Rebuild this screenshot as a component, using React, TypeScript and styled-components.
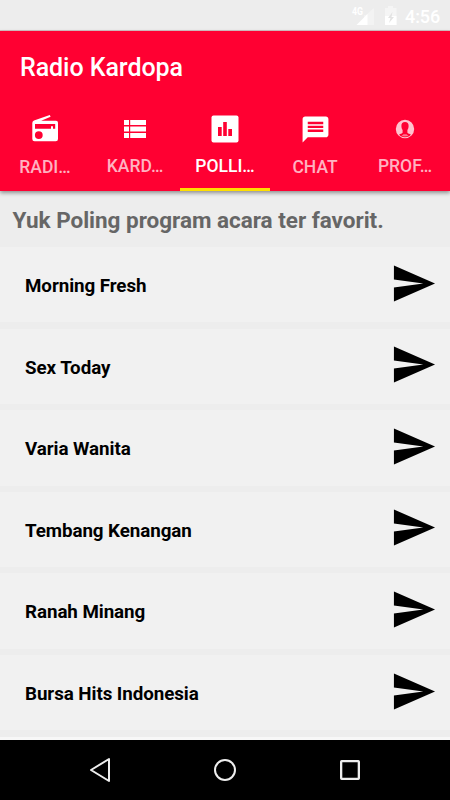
import React from 'react';
import styled, { createGlobalStyle } from 'styled-components';

const GlobalStyle = createGlobalStyle`
  * { box-sizing: border-box; }
  body { margin: 0; background: #ededed; font-family: Roboto, sans-serif; }
  svg { display: block; flex: none; }
`;

const Screen = styled.div`
  width: 450px;
  height: 800px;
  display: flex;
  flex-direction: column;
  overflow: hidden;
  background: #ededed;
`;

const StatusBar = styled.div`
  flex: none;
  height: 31px;
  display: flex;
  justify-content: flex-end;
  padding-right: 10px;
  border-bottom: 1px solid #d6bfc2;
  color: #fff;
`;

const Clock = styled.span`
  font-size: 18px;
  font-weight: 500;
  line-height: 33px;
  width: 35px;
  margin-left: 5px;
  letter-spacing: -0.1px;
`;

const AppBar = styled.header`
  flex: none;
  height: 160px;
  display: flex;
  flex-direction: column;
  background: #ff0032;
  color: #fff;
  box-shadow: 0 2px 4px rgba(0, 0, 0, 0.4);
  position: relative;
`;

const Title = styled.h1`
  margin: 0;
  height: 73px;
  padding-left: 20px;
  font-size: 25px;
  font-weight: 500;
  line-height: 74px;
  letter-spacing: -0.06px;
`;

const Tabs = styled.nav`
  flex: 1;
  display: grid;
  grid-template-columns: repeat(5, 90px);
`;

const Tab = styled.div<{ $active?: boolean }>`
  display: flex;
  flex-direction: column;
  align-items: center;
  border-bottom: 3px solid ${(p) => (p.$active ? '#ffde00' : 'transparent')};
  color: ${(p) => (p.$active ? '#fff' : '#ffb2c1')};
`;

const TabIcon = styled.div`
  height: 50px;
  display: flex;
  align-items: center;
  color: #fff;
`;

const TabLabel = styled.span<{ $drop: number }>`
  font-size: 17.5px;
  font-weight: 500;
  line-height: 24px;
  padding-top: ${(p) => p.$drop}px;
`;

const Heading = styled.h2`
  flex: none;
  margin: 0;
  height: 56px;
  padding-left: 12.5px;
  font-size: 22.5px;
  font-weight: 700;
  line-height: 58px;
  letter-spacing: -0.02px;
  color: #666;
  white-space: nowrap;
`;

const List = styled.main`
  flex: 1;
  display: flex;
  flex-direction: column;
  gap: 6.2px;
  border-bottom: 3px solid #f7f7f7;
`;

const Row = styled.div`
  flex: none;
  height: 75.4px;
  display: flex;
  align-items: center;
  justify-content: space-between;
  padding: 0 13px 3px 25px;
  background: #f1f1f1;
`;

const RowName = styled.span`
  font-size: 18.75px;
  font-weight: 700;
  line-height: 24px;
  letter-spacing: -0.06px;
  color: #000;
  padding-top: 5.6px;
`;

const NavBar = styled.footer`
  flex: none;
  height: 60px;
  display: grid;
  grid-template-columns: repeat(3, 125px);
  justify-content: center;
  align-items: center;
  justify-items: center;
  background: #000;
`;

const SendIcon = () => (
  <svg width="47" height="47" viewBox="0 0 24 24">
    <path d="M2.01 21.2 23 12 2.01 2.8 2 9.9 17 12 2 14.1z" />
  </svg>
);

const RadioIcon = () => (
  <svg width="30" height="30" viewBox="30 114 30 30" fill="currentColor">
    <path
      fillRule="evenodd"
      d="M34 120.600 49.800 115l.8 1.700-9.400 4.100H56q2 0 2 2V139q0 2.300-2.300 2.300H34.600q-2.300 0-2.300-2.300v-16q0-1.800 1.700-2.400zM35 124v4.700h16v-2.500h2v2.500h2.200V124zM38.800 131.200a3.900 3.900 0 1 0 0 7.800 3.900 3.900 0 0 0 0-7.800z"
    />
  </svg>
);

const ListIcon = () => (
  <svg width="22" height="18" viewBox="0 0 22 18" fill="currentColor">
    <path d="M0 0h5v5H0zM6.200 0H22v5H6.200zM0 6.500h5v5H0zM6.200 6.500H22v5H6.200zM0 13h5v5H0zM6.200 13H22v5H6.200z" />
  </svg>
);

const PollIcon = () => (
  <svg width="28" height="28" viewBox="0 0 28 28">
    <rect x="0.500" y="0.500" width="27" height="27" rx="2" fill="#fff" />
    <path fill="#ff0032" d="M7 12h3.700v9H7zM12.200 7h3.600v14h-3.600zM17.300 14h3.700v7h-3.700z" />
  </svg>
);

const ChatIcon = () => (
  <svg width="31" height="31" viewBox="0 0 24 24" fill="currentColor">
    <path d="M20 2H4c-1.100 0-1.990.9-1.990 2L2 22l4-4h14c1.100 0 2-.9 2-2V4c0-1.100-.9-2-2-2zM6 6h12v2H6zm0 3.100h12v1.800H6zM6 12h12v2H6z" fillRule="evenodd" />
  </svg>
);

const ProfileIcon = () => (
  <svg width="20" height="20" viewBox="0 0 20 20" fill="none">
    <circle cx="10" cy="10" r="8" fill="#ff0032" />
    <path
      fill="#ffc2ce"
      fillRule="evenodd"
      d="M10 .8a9.200 9.200 0 1 0 0 18.400A9.200 9.200 0 0 0 10 .8zM10 3c-2.400 0-3.700 1.500-3.600 3.900.05 2 .6 3.200 1.200 4.100v2.800c-.4.900-2.600 1-3.400 1.700.8 1.200 1.300 1.300 1.800 1.700 2.400 1.300 5.600 1.300 8 0 .5-.4 1-.5 1.800-1.700-.8-.7-3-.8-3.400-1.700V11c.6-.9 1.150-2.100 1.200-4.100C13.700 4.500 12.400 3 10 3z"
    />
    <path fill="#ffc2ce" d="M6.500 16.400c.8-.4 1.600-.6 2-1.200h3c.4.600 1.200.8 2 1.200-1.800 1.300-5.200 1.300-7 0z" opacity=".6" />
  </svg>
);

const StatusIcons = () => (
  <svg width="50" height="30" viewBox="350 0 50 30">
    <text x="352" y="15" fontSize="10" fontWeight="700" textLength="11" lengthAdjust="spacingAndGlyphs" fill="#fff">4G</text>
    <path d="M374 8v17h-10V15h2z" fill="#f3f3f3" />
    <path d="M367.500 14v11H356.500z" fill="#fff" />
    <path d="M385 8h3V6h5v2h3.500v17H385z" fill="#f5f5f5" />
    <path d="M385 16h11.500v9H385z" fill="#fff" />
    <path d="m392.500 12-4.500 6h2.500l-1.500 5 5-6h-2.500z" fill="#e3e3e3" />
  </svg>
);

const BackIcon = () => (
  <svg width="24" height="28" viewBox="0 0 24 28" fill="none" stroke="#eee" strokeWidth="2" strokeLinejoin="round">
    <path d="M21 3v22L3 14z" />
  </svg>
);

const HomeIcon = () => (
  <svg width="24" height="24" viewBox="0 0 24 24" fill="none" stroke="#eee" strokeWidth="2">
    <circle cx="12" cy="12" r="10" />
  </svg>
);

const RecentIcon = () => (
  <svg width="20" height="20" viewBox="0 0 20 20" fill="none" stroke="#eee" strokeWidth="2.300">
    <rect x="1.150" y="1.150" width="17.700" height="17.700" rx="0.500" />
  </svg>
);

const tabs = [
  { label: 'RADI…', icon: <RadioIcon />, drop: 1 },
  { label: 'KARD…', icon: <ListIcon />, drop: 0 },
  { label: 'POLLI…', icon: <PollIcon />, drop: 0, active: true },
  { label: 'CHAT', icon: <ChatIcon />, drop: 1 },
  { label: 'PROF…', icon: <ProfileIcon />, drop: 0 },
];

const programs = ['Morning Fresh', 'Sex Today', 'Varia Wanita', 'Tembang Kenangan', 'Ranah Minang', 'Bursa Hits Indonesia'];

export default function App() {
  return (
    <Screen>
      <GlobalStyle />
      <StatusBar>
        <StatusIcons />
        <Clock>4:56</Clock>
      </StatusBar>
      <AppBar>
        <Title>Radio Kardopa</Title>
        <Tabs>
          {tabs.map((t) => (
            <Tab key={t.label} $active={t.active}>
              <TabIcon>{t.icon}</TabIcon>
              <TabLabel $drop={t.drop}>{t.label}</TabLabel>
            </Tab>
          ))}
        </Tabs>
      </AppBar>
      <Heading>Yuk Poling program acara ter favorit.</Heading>
      <List>
        {programs.map((name) => (
          <Row key={name}>
            <RowName>{name}</RowName>
            <SendIcon />
          </Row>
        ))}
      </List>
      <NavBar>
        <BackIcon />
        <HomeIcon />
        <RecentIcon />
      </NavBar>
    </Screen>
  );
}
